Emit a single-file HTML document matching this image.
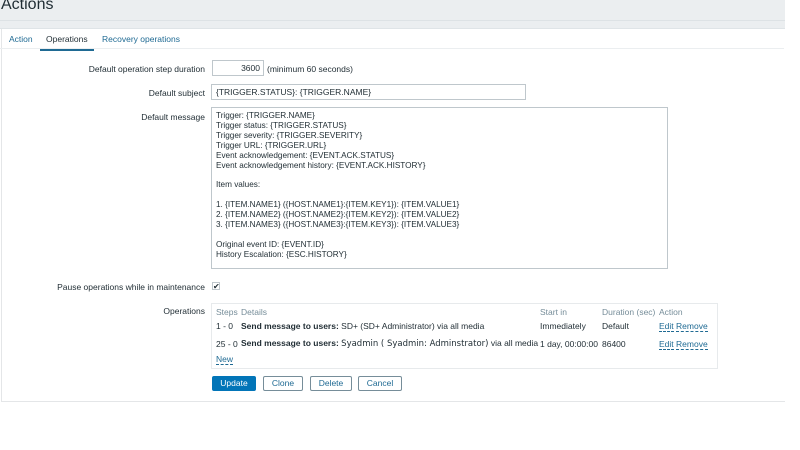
<!DOCTYPE html>
<html><head><style>
body{margin:0;width:800px;height:450px;background:#fff;font-family:"Liberation Sans",sans-serif;font-size:8.5px;color:#1f2c33;position:relative;overflow:hidden}
.hdr{position:absolute;left:0;top:0;width:785px;height:28px;background:#ebeef0;border-bottom:1px solid #dfe4e7}
.hdr .l{position:absolute;left:0;right:0;top:20px;border-top:1px solid #dde2e5}
h1{position:absolute;left:1px;top:-4px;margin:0;font-weight:normal;font-size:16px;color:#1f2c33}
.panel{position:absolute;left:1px;top:29px;width:783px;height:372px;border-left:1px solid #e4e6e8;border-bottom:1px solid #e4e6e8;background:#fff}
.tabs{position:absolute;left:0;top:29px;width:784px;height:19px;border-bottom:1px solid #ebeef0}
.tab{position:absolute;top:5px;color:#1f6a93;font-size:8.5px}
.sel{color:#1f2c33;border-bottom:2px solid #1f6a93;padding:0 6px 5px}
.lab{position:absolute;right:595px;text-align:right;white-space:nowrap}
.inp{position:absolute;border:1px solid #bfc7cc;background:#fff;box-sizing:border-box}
.t{position:absolute;white-space:nowrap}
a{color:#1f6a93;border-bottom:1px dashed #1f6a93;text-decoration:none}
.btn{position:absolute;top:376px;height:15px;box-sizing:border-box;border:1px solid #768d99;border-radius:2px;color:#1f6a93;text-align:center;line-height:13px}
</style></head><body>
<div class="hdr"><div class="l"></div></div>
<h1>Actions</h1>
<div class="panel"></div>
<div class="tabs"></div>
<div class="tab" style="left:9px;top:34px">Action</div>
<div class="tab sel" style="left:40px;top:34px">Operations</div>
<div class="tab" style="left:102px;top:34px">Recovery operations</div>

<div class="lab" style="top:64px">Default operation step duration</div>
<div class="inp" style="left:212px;top:60px;width:52px;height:16px;text-align:right;padding:2px 3px">3600</div>
<div class="t" style="left:267px;top:64px">(minimum 60 seconds)</div>

<div class="lab" style="top:88px">Default subject</div>
<div class="inp" style="left:211px;top:84px;width:315px;height:16px;padding:2px 4px">{TRIGGER.STATUS}: {TRIGGER.NAME}</div>

<div class="lab" style="top:112px">Default message</div>
<div class="inp" style="left:211px;top:107px;width:457px;height:162px;padding:3px 4px;line-height:9.9px;font-size:8.2px">Trigger: {TRIGGER.NAME}<br>Trigger status: {TRIGGER.STATUS}<br>Trigger severity: {TRIGGER.SEVERITY}<br>Trigger URL: {TRIGGER.URL}<br>Event acknowledgement: {EVENT.ACK.STATUS}<br>Event acknowledgement history: {EVENT.ACK.HISTORY}<br><br>Item values:<br><br>1. {ITEM.NAME1} ({HOST.NAME1}:{ITEM.KEY1}): {ITEM.VALUE1}<br>2. {ITEM.NAME2} ({HOST.NAME2}:{ITEM.KEY2}): {ITEM.VALUE2}<br>3. {ITEM.NAME3} ({HOST.NAME3}:{ITEM.KEY3}): {ITEM.VALUE3}<br><br>Original event ID: {EVENT.ID}<br>History Escalation: {ESC.HISTORY}</div>

<div class="lab" style="top:282px">Pause operations while in maintenance</div>
<div class="inp" style="left:212px;top:282px;width:8px;height:8px;font-size:8px;line-height:7px;text-align:center">✔</div>

<div class="lab" style="top:306px">Operations</div>
<div class="inp" style="left:211px;top:303px;width:507px;height:66px;border-color:#e7eaec"></div>
<div class="t" style="left:216px;top:307px;color:#768d99">Steps</div>
<div class="t" style="left:241px;top:307px;color:#768d99">Details</div>
<div class="t" style="left:540px;top:307px;color:#768d99">Start in</div>
<div class="t" style="left:602px;top:307px;color:#768d99">Duration (sec)</div>
<div class="t" style="left:659px;top:307px;color:#768d99">Action</div>
<div class="t" style="left:216px;top:321px">1 - 0</div>
<div class="t" style="left:241px;top:321px"><b>Send message to users:</b> SD+ (SD+ Administrator) via all media</div>
<div class="t" style="left:540px;top:321px">Immediately</div>
<div class="t" style="left:602px;top:321px">Default</div>
<div class="t" style="left:659px;top:321px"><a>Edit</a> <a>Remove</a></div>
<div class="t" style="left:216px;top:339px">25 - 0</div>
<div class="t" style="left:241px;top:338px"><b>Send message to users:</b> <span style="font-family:'DejaVu Sans';font-size:8.5px">Syadmin ( Syadmin: Adminstrator)</span> via all media</div>
<div class="t" style="left:540px;top:339px">1 day, 00:00:00</div>
<div class="t" style="left:602px;top:339px">86400</div>
<div class="t" style="left:659px;top:339px"><a>Edit</a> <a>Remove</a></div>
<div class="t" style="left:216px;top:354px"><a>New</a></div>

<div class="btn" style="left:212px;width:44px;background:#0275b8;border-color:#0275b8;color:#fff">Update</div>
<div class="btn" style="left:263px;width:40px">Clone</div>
<div class="btn" style="left:310px;width:42px">Delete</div>
<div class="btn" style="left:358px;width:44px">Cancel</div>
</body></html>
